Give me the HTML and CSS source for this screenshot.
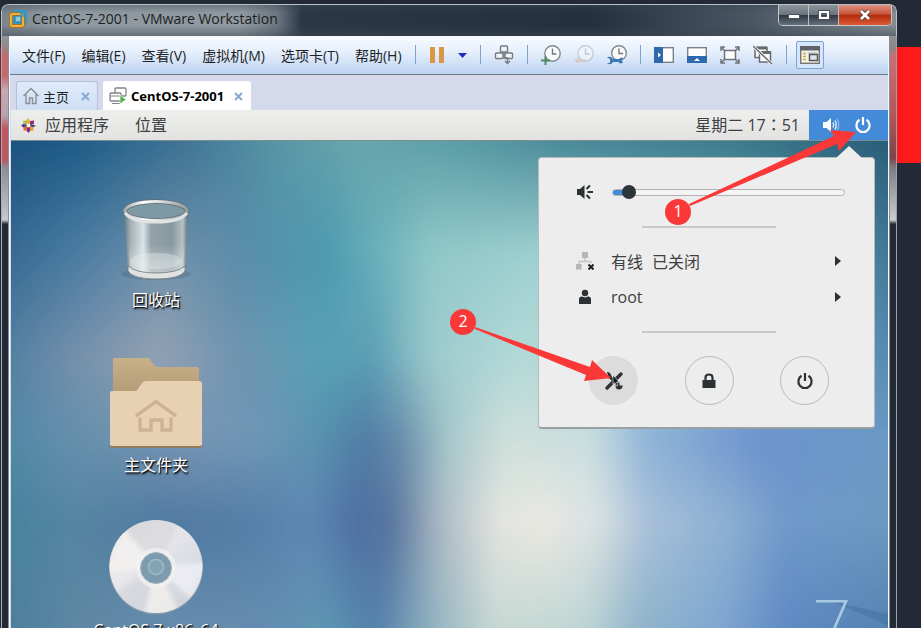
FILE: index.html
```html
<!DOCTYPE html>
<html lang="zh-CN">
<head>
<meta charset="utf-8">
<title>CentOS-7-2001 - VMware Workstation</title>
<link rel="stylesheet" href="styles.css">
</head>
<body>
<div class="backdrop-band"></div>
<div class="window">
  <header class="titlebar">
    <svg class="app-icon" width="18" height="18" viewBox="0 0 18 18" aria-hidden="true">
      <rect x="4.500" y="1.500" width="12" height="12" rx="2" fill="none" stroke="#2c9ac4" stroke-width="3"/>
      <path d="M11 4H3.500Q2 4 2 5.500V14.500Q2 16 3.500 16H12.500Q14 16 14 14.500V7" fill="none" stroke="#b96a10" stroke-width="3.600"/>
      <path d="M11 4H3.500Q2 4 2 5.500V14.500Q2 16 3.500 16H12.500Q14 16 14 14.500V7" fill="none" stroke="#f3b32f" stroke-width="2"/>
      <rect x="6" y="6" width="6" height="6" rx="1" fill="#8fc7db" stroke="#1d7da6"/>
    </svg>
    <h1 class="title">CentOS-7-2001 - VMware Workstation</h1>
    <div class="window-buttons">
      <button class="wb wb-min" aria-label="最小化"><svg width="14" height="14" viewBox="0 0 14 14"><rect x="1.500" y="6.500" width="11" height="4" fill="#fff" stroke="#4a525b"/></svg></button>
      <button class="wb wb-max" aria-label="最大化"><svg width="14" height="14" viewBox="0 0 14 14"><path d="M1.500 2.500H12.500V11.500H1.500ZM4.500 5.500V8.500H9.500V5.500Z" fill="#fff" fill-rule="evenodd" stroke="#4a525b"/></svg></button>
      <button class="wb wb-close" aria-label="关闭"><svg width="14" height="14" viewBox="0 0 14 14"><path d="M3 3L11 11M11 3L3 11" stroke="#5b3a38" stroke-width="4.500"/><path d="M3 3L11 11M11 3L3 11" stroke="#fff" stroke-width="2.600"/></svg></button>
    </div>
  </header>
  <div class="frame frame-left"></div>
  <main class="content">
    <nav class="menubar">
      <button class="menu">文件(F)</button>
      <button class="menu">编辑(E)</button>
      <button class="menu">查看(V)</button>
      <button class="menu">虚拟机(M)</button>
      <button class="menu">选项卡(T)</button>
      <button class="menu">帮助(H)</button>
      <div class="toolbar">
        <span class="sep"></span>
        <button class="tool" aria-label="挂起"><svg width="16" height="20" viewBox="0 0 16 20"><path d="M1 2H6V18H1ZM10 2H15V18H10Z" fill="#d99645"/></svg></button>
        <button class="tool" aria-label="电源选项"><svg width="9" height="20" viewBox="0 0 9 20"><path d="M0 8H9L4.500 13Z" fill="#1d2fc4"/></svg></button>
        <span class="sep"></span>
        <button class="tool" aria-label="发送按键"><svg width="20" height="20" viewBox="0 0 20 20" fill="#f2f5fa" stroke="#777b80" stroke-width="1.400"><rect x="6.500" y="1" width="7" height="6" rx="1"/><rect x="1.500" y="8" width="7.500" height="5.500" rx="1"/><rect x="11" y="8" width="7.500" height="5.500" rx="1"/><path d="M10 7V13H13.500V18M11 16L13.500 18.500L16 16" fill="none"/></svg></button>
        <span class="sep"></span>
        <button class="tool" aria-label="拍摄快照"><svg width="20" height="20" viewBox="0 0 20 20"><circle cx="11.500" cy="8.500" r="7.700" fill="#f9fafc" stroke="#85898d" stroke-width="1.400"/><path d="M11.500 3.500V9H15.500" fill="none" stroke="#777" stroke-width="1.400"/><path d="M4.500 11.500V20M0 15.500H9" stroke="#4f8a62" stroke-width="2"/></svg></button>
        <button class="tool faded" aria-label="恢复快照"><svg width="20" height="20" viewBox="0 0 20 20"><circle cx="11.500" cy="8.500" r="7.700" fill="#f9fafc" stroke="#a0a3a6" stroke-width="1.400"/><path d="M11.500 3.500V9H15.500" fill="none" stroke="#999" stroke-width="1.400"/><path d="M0 15.500L4 12.500V14.500H12V17H4V18.500Z" fill="#dba983"/></svg></button>
        <button class="tool" aria-label="管理快照"><svg width="20" height="20" viewBox="0 0 20 20"><circle cx="12" cy="8" r="7.300" fill="#f9fafc" stroke="#85898d" stroke-width="1.400"/><path d="M12 3.500V8.500H16" fill="none" stroke="#777" stroke-width="1.400"/><path d="M0 12.500Q4 10.500 6 14H12Q14 11.500 16 13L14.500 15L16 17.500Q13 19.500 11.500 17H6Q4 20.500 0 18.500L3 17.500V14Z" fill="#3b79b8"/></svg></button>
        <span class="sep"></span>
        <button class="tool" aria-label="显示库"><svg width="20" height="20" viewBox="0 0 20 20"><rect x=".7" y="2.700" width="18.600" height="14.600" fill="#fdfdfe" stroke="#7b7f86" stroke-width="1.400"/><path d="M0 2H9V18H0Z" fill="#2e69ad"/><path d="M4 7.500L7 10L4 12.500Z" fill="#fff"/></svg></button>
        <button class="tool" aria-label="缩略图栏"><svg width="20" height="20" viewBox="0 0 20 20"><rect x=".7" y="2.700" width="18.600" height="14.600" fill="#fdfdfe" stroke="#7b7f86" stroke-width="1.400"/><path d="M0 11H20V18H0Z" fill="#2e69ad"/><path d="M7 16L10 13L13 16Z" fill="#fff"/></svg></button>
        <button class="tool" aria-label="全屏"><svg width="20" height="20" viewBox="0 0 20 20" fill="none" stroke="#6f7377" stroke-width="1.500"><rect x="4.500" y="5.500" width="11" height="9" fill="#fdfdfe"/><path d="M1 6V2H5M1 2L4.500 5.500M15 2H19V6M19 2L15.500 5.500M1 14V18H5M1 18L4.500 14.500M15 18H19V14M19 18L15.500 14.500"/></svg></button>
        <button class="tool" aria-label="Unity"><svg width="20" height="20" viewBox="0 0 20 20" fill="#fdfdfe" stroke="#666a6f" stroke-width="1.500"><rect x="2" y="2.500" width="12" height="10"/><path d="M2 3H14" stroke-width="3"/><rect x="6.500" y="7" width="11" height="10"/><path d="M6.500 7.500H17.500" stroke-width="3"/><path d="M0 1L19 19" stroke="#fff" stroke-width="3"/><path d="M0 1L19 19"/></svg></button>
        <span class="sep"></span>
        <button class="tool tool-active" aria-label="控制台视图"><svg width="20" height="20" viewBox="0 0 20 20"><rect x=".7" y="1.700" width="18.600" height="16.600" fill="#f4f1e6" stroke="#777" stroke-width="1.400"/><path d="M0 1H20V5.500H0Z" fill="#5f646a"/><path d="M3 8.500H6M3 11.500H6M3 14.500H6" stroke="#d8a94a" stroke-width="1.500"/><path d="M8 8H17" stroke="#c9ced6" stroke-width="2"/><rect x="9.500" y="9.500" width="8" height="6" fill="#dfe5ee" stroke="#555" stroke-width="1.500"/></svg></button>
      </div>
    </nav>
    <div class="tabs">
      <div class="tab">
        <svg width="16" height="18" viewBox="0 0 16 18" fill="none" stroke="#8b8f94" stroke-width="1.400"><path d="M.5 9L8 1.500L15.500 9M3 7.500V16.500H6.500V11H9.500V16.500H13V7.500"/></svg>
        <span class="tab-name">主页</span>
        <button class="tab-close" aria-label="关闭主页"><svg width="9" height="9" viewBox="0 0 9 9"><path d="M1 1L8 8M8 1L1 8" stroke="#86a9d3" stroke-width="2"/></svg></button>
      </div>
      <div class="tab tab-current">
        <svg width="18" height="18" viewBox="0 0 18 18" fill="#fff" stroke="#808488" stroke-width="1.300"><rect x="6" y="1" width="11" height="8" rx="1"/><rect x="1" y="6" width="11" height="8" rx="1"/><path d="M3 16.500H11M1 9H12" stroke-width="1"/><path d="M11 8L17 12.500L11 17Z" fill="#4db848" stroke="#fff" stroke-width=".6"/></svg>
        <span class="tab-name">CentOS-7-2001</span>
        <button class="tab-close" aria-label="关闭 CentOS-7-2001"><svg width="9" height="9" viewBox="0 0 9 9"><path d="M1 1L8 8M8 1L1 8" stroke="#86a9d3" stroke-width="2"/></svg></button>
      </div>
    </div>
    <section class="guest">
      <div class="topbar">
        <svg class="distro" width="15" height="15" viewBox="0 0 15 15" aria-hidden="true"><path d="M7 0L9 3V7H4.500V3Z" fill="#e5b33c"/><path d="M9 3L13 2.500V6L9 7Z" fill="#8d2f7d"/><path d="M15 7.500L11 10L8 8V6Z" fill="#3b3a86"/><path d="M8 8L12.500 9V12.500L9 13Z" fill="#e2a03a"/><path d="M7.500 15L5 12V8H9V13Z" fill="#7a2c7c"/><path d="M0 7.500L3.500 5L7 7.500L3 10Z" fill="#4b3f8f"/><path d="M2 2.500L6 3L6.500 7L2.500 6Z" fill="#a5c05a"/><path d="M2.500 9L6.500 8L6 12.500L2.500 12.500Z" fill="#dc6b4d"/><circle cx="7.500" cy="7.500" r="2" fill="#f6f1e8"/></svg>
        <button class="top-item">应用程序</button>
        <button class="top-item">位置</button>
        <span class="clock" lang="zh-TW">星期二 17：51</span>
        <button class="status" aria-label="系统菜单">
          <svg width="18" height="16" viewBox="0 0 18 16"><path d="M1 5H4.500L9 1V15L4.500 11H1Z" fill="#fff"/><path d="M11 5.500Q12.500 8 11 10.500M13 3.500Q15.500 8 13 12.500" stroke="#e4effa" stroke-width="1.400" fill="none"/><path d="M15 1.500Q18.500 8 15 14.500" stroke="#8bb6e6" stroke-width="1.300" fill="none"/></svg>
          <svg width="18" height="18" viewBox="0 0 18 18" fill="none" stroke="#fff" stroke-width="2.200"><path d="M5.500 3.800A6.600 6.600 0 1 0 12.500 3.800M9 1V9"/></svg>
        </button>
      </div>
      <div class="desktop">
        <svg class="wallpaper" viewBox="0 0 877 488" preserveAspectRatio="none" aria-hidden="true">
          <defs>
            <linearGradient id="r0"><stop offset="0" stop-color="#1b4f7b"/><stop offset=".1" stop-color="#1f5c87"/><stop offset=".22" stop-color="#3f7496"/><stop offset=".31" stop-color="#5794a5"/><stop offset=".4" stop-color="#6aa6ad"/><stop offset=".5" stop-color="#5c9ea7"/><stop offset=".62" stop-color="#4a8a99"/><stop offset=".8" stop-color="#3d7c8d"/><stop offset="1" stop-color="#275874"/></linearGradient>
            <linearGradient id="r1"><stop offset="0" stop-color="#2f638c"/><stop offset=".1" stop-color="#4a7ca3"/><stop offset=".2" stop-color="#7291aa"/><stop offset=".28" stop-color="#5a8da9"/><stop offset=".37" stop-color="#4c9bb0"/><stop offset=".42" stop-color="#68afba"/><stop offset=".48" stop-color="#90c8c9"/><stop offset=".6" stop-color="#a0d2d2"/><stop offset=".8" stop-color="#78aebd"/><stop offset="1" stop-color="#376f91"/></linearGradient>
            <linearGradient id="r2"><stop offset="0" stop-color="#477ba0"/><stop offset=".1" stop-color="#7590ab"/><stop offset=".19" stop-color="#93a2b3"/><stop offset=".27" stop-color="#7194b0"/><stop offset=".36" stop-color="#58a0b4"/><stop offset=".42" stop-color="#5c9fb4"/><stop offset=".48" stop-color="#9ccacd"/><stop offset=".58" stop-color="#b5dad8"/><stop offset=".8" stop-color="#86b4cf"/><stop offset="1" stop-color="#4d85ad"/></linearGradient>
            <linearGradient id="r3"><stop offset="0" stop-color="#4985a3"/><stop offset=".1" stop-color="#6490ac"/><stop offset=".22" stop-color="#7894b3"/><stop offset=".3" stop-color="#6d97b6"/><stop offset=".36" stop-color="#5992af"/><stop offset=".41" stop-color="#4f7ca6"/><stop offset=".45" stop-color="#698eab"/><stop offset=".5" stop-color="#a7c8cc"/><stop offset=".56" stop-color="#cfe0da"/><stop offset=".65" stop-color="#cadfe0"/><stop offset=".71" stop-color="#90b4d8"/><stop offset=".83" stop-color="#6c93cd"/><stop offset="1" stop-color="#6a9bc4"/></linearGradient>
            <linearGradient id="r4"><stop offset="0" stop-color="#43829e"/><stop offset=".1" stop-color="#5585a1"/><stop offset=".2" stop-color="#5079a2"/><stop offset=".29" stop-color="#557fa8"/><stop offset=".35" stop-color="#5e87b4"/><stop offset=".4" stop-color="#4e70a3"/><stop offset=".44" stop-color="#59759f"/><stop offset=".49" stop-color="#aab9c3"/><stop offset=".55" stop-color="#e3e4e0"/><stop offset=".6" stop-color="#ebe8e2"/><stop offset=".66" stop-color="#d9e1e3"/><stop offset=".71" stop-color="#a9c1d9"/><stop offset=".8" stop-color="#8cafd2"/><stop offset=".86" stop-color="#6f99ca"/><stop offset="1" stop-color="#6a9abf"/></linearGradient>
            <linearGradient id="r5"><stop offset="0" stop-color="#477a98"/><stop offset=".1" stop-color="#5f88a3"/><stop offset=".2" stop-color="#6a8fae"/><stop offset=".3" stop-color="#668fb1"/><stop offset=".37" stop-color="#5e98b3"/><stop offset=".42" stop-color="#5282ac"/><stop offset=".48" stop-color="#8eb1c0"/><stop offset=".55" stop-color="#c3d7d1"/><stop offset=".64" stop-color="#bad4d2"/><stop offset=".7" stop-color="#8eb3c8"/><stop offset=".79" stop-color="#7ca5d0"/><stop offset=".86" stop-color="#5d87c2"/><stop offset="1" stop-color="#4e7da9"/></linearGradient>
            <linearGradient id="fade" x2="0" y2="1"><stop offset="0" stop-color="#000"/><stop offset="1" stop-color="#fff"/></linearGradient>
            <filter id="soft" filterUnits="userSpaceOnUse" x="-30" y="-30" width="937" height="548"><feGaussianBlur stdDeviation="9"/></filter>
            <mask id="m1" maskContentUnits="userSpaceOnUse"><path d="M-30 0H907V110H-30Z" fill="url(#fade)"/><path d="M-30 110H907V518H-30Z" fill="#fff"/></mask>
            <mask id="m2" maskContentUnits="userSpaceOnUse"><path d="M-30 110H907V210H-30Z" fill="url(#fade)"/><path d="M-30 210H907V518H-30Z" fill="#fff"/></mask>
            <mask id="m3" maskContentUnits="userSpaceOnUse"><path d="M-30 210H907V290H-30Z" fill="url(#fade)"/><path d="M-30 290H907V518H-30Z" fill="#fff"/></mask>
            <mask id="m4" maskContentUnits="userSpaceOnUse"><path d="M-30 290H907V370H-30Z" fill="url(#fade)"/><path d="M-30 370H907V518H-30Z" fill="#fff"/></mask>
            <mask id="m5" maskContentUnits="userSpaceOnUse"><path d="M-30 370H907V488H-30Z" fill="url(#fade)"/><path d="M-30 488H907V518H-30Z" fill="#fff"/></mask>
          </defs>
          <g filter="url(#soft)">
            <rect x="-30" y="-30" width="937" height="548" fill="url(#r0)"/>
            <rect x="-30" y="-30" width="937" height="548" fill="url(#r1)" mask="url(#m1)"/>
            <rect x="-30" y="-30" width="937" height="548" fill="url(#r2)" mask="url(#m2)"/>
            <rect x="-30" y="-30" width="937" height="548" fill="url(#r3)" mask="url(#m3)"/>
            <rect x="-30" y="-30" width="937" height="548" fill="url(#r4)" mask="url(#m4)"/>
            <rect x="-30" y="-30" width="937" height="548" fill="url(#r5)" mask="url(#m5)"/>
          </g>
          <path d="M822 447L877 459V470Z" fill="#3d6f9d" opacity=".45"/>
          <path d="M805 446.500H835L813 496" fill="none" stroke="#a9c8e2" stroke-width="2.600"/>
        </svg>
        <div class="icons">
          <div class="icon">
            <svg width="96" height="96" viewBox="0 0 96 96" aria-hidden="true">
              <defs>
                <linearGradient id="can"><stop offset="0" stop-color="#65767d"/><stop offset=".1" stop-color="#a9b4b7"/><stop offset=".3" stop-color="#e4eaea"/><stop offset=".42" stop-color="#97a5a9"/><stop offset=".75" stop-color="#8b9a9f"/><stop offset=".92" stop-color="#bcc6c8"/><stop offset="1" stop-color="#5f6d73"/></linearGradient>
                <linearGradient id="rim"><stop offset="0" stop-color="#a7adad"/><stop offset=".3" stop-color="#fff"/><stop offset=".6" stop-color="#d5d8d8"/><stop offset="1" stop-color="#949c9e"/></linearGradient>
                <linearGradient id="glow" x2="0" y2="1"><stop offset=".3" stop-color="#fff" stop-opacity="0"/><stop offset="1" stop-color="#fff" stop-opacity=".5"/></linearGradient>
              </defs>
              <ellipse cx="48" cy="84" rx="35" ry="6" fill="#2f4b66" opacity=".2"/>
              <path d="M16 22L20 80Q22 89 48 89Q74 89 77 80L80 22Z" fill="url(#can)" opacity=".92"/>
              <path d="M19 40L22 80Q30 87 48 87Q68 87 75 80L78 40Z" fill="url(#glow)"/>
              <ellipse cx="48" cy="71" rx="26" ry="8" fill="#e6ebea" opacity=".4"/>
              <path d="M20 76Q28 83 48 83Q69 83 77 76V81Q72 89 48 89Q25 89 20 81Z" fill="#dfe2e1" stroke="#6d7678" stroke-width=".8"/>
              <ellipse cx="48" cy="21" rx="31" ry="9.500" fill="#7e99a6" stroke="#5e6a70" stroke-width="4.500"/>
              <ellipse cx="48" cy="21" rx="31" ry="9.500" fill="none" stroke="url(#rim)" stroke-width="3.200"/>
              <path d="M17 23Q24 32 48 32Q72 32 79 23" fill="none" stroke="#e0e3e3" stroke-width="3"/>
            </svg>
            <span class="label">回收站</span>
          </div>
          <div class="icon">
            <svg width="96" height="96" viewBox="0 0 96 96" aria-hidden="true">
              <defs><linearGradient id="back" x2="0" y2="1"><stop offset="0" stop-color="#c8b188"/><stop offset="1" stop-color="#b29b75"/></linearGradient></defs>
              <path d="M5 4Q5 3 7 3H39Q42 3 43 6L46 10Q47 12 50 12H89Q91 12 91 14V40H5Z" fill="url(#back)"/>
              <path d="M2 90V39Q2 36 5 36H28Q30 36 31 33L34 28Q35 26 38 26H91Q94 26 94 28V90Q94 93 91 93H5Q2 93 2 90Z" fill="#937c5c"/>
              <path d="M2 89V38Q2 36 4 36H27Q29 36 30 34L34 28Q35 26 38 26H91Q94 26 94 28V89Q94 91 91 91H5Q2 91 2 89Z" fill="#e8d1b3"/>
              <path d="M28 61L48 46.500L68 61M32 62.500V75H43V65H54V75H63V62.500" fill="none" stroke="#cdb394" stroke-width="3.400"/>
            </svg>
            <span class="label">主文件夹</span>
          </div>
          <div class="icon">
            <svg width="96" height="96" viewBox="0 0 96 96" aria-hidden="true">
              <defs>
                <linearGradient id="disc" x2="1" y2="1"><stop offset="0" stop-color="#dcdce0"/><stop offset=".35" stop-color="#eae8ea"/><stop offset=".6" stop-color="#dddfe8"/><stop offset="1" stop-color="#c9ccd3"/></linearGradient>
                <filter id="sheen"><feGaussianBlur stdDeviation="2"/></filter>
                <clipPath id="disc-edge"><circle cx="48" cy="46.500" r="46.500"/></clipPath>
              </defs>
              <circle cx="48" cy="47.500" r="47" fill="#8798a7"/>
              <circle cx="48" cy="46.500" r="46.500" fill="url(#disc)"/>
              <g clip-path="url(#disc-edge)"><g filter="url(#sheen)">
                <path d="M48 46L-4 54L14 8Z" fill="#f4f2f0" opacity=".8"/>
                <path d="M48 46L16 8L40 -6L72 2Z" fill="#cfd0d5" opacity=".5"/>
                <path d="M48 46L100 42L84 80Z" fill="#f3f4f8" opacity=".7"/>
                <path d="M48 46L36 98H74Z" fill="#f6f3ee" opacity=".7"/>
                <path d="M48 46L34 98L6 74Z" fill="#d0d2d9" opacity=".6"/>
              </g></g>
              <circle cx="48" cy="48" r="20" fill="#f3f1f0" opacity=".75"/>
              <circle cx="48" cy="48" r="15.500" fill="#7c9bae" stroke="#a9b5bc"/>
              <circle cx="48" cy="47" r="7.500" fill="#84a3b5" stroke="#a3bac6" stroke-width="1.500"/>
            </svg>
            <span class="label">CentOS 7 x86_64</span>
          </div>
        </div>
        <aside class="system-menu">
          <div class="row volume">
            <svg width="18" height="18" viewBox="0 0 18 18" fill="#2c3133"><path d="M1 6H4L8.500 2V16L4 12H1Z"/><path d="M10.500 6L14 2.500M11.500 9H17M10.500 12L14 15.500" stroke="#2c3133" stroke-width="2"/></svg>
            <input class="slider" type="range" min="0" max="100" value="4" aria-label="音量">
          </div>
          <hr class="rule">
          <div class="rows">
            <button class="row">
              <svg width="18" height="18" viewBox="0 0 18 18"><path d="M6 0H12V6H6ZM0 12H5.500V17.500H0Z" fill="#b5b6b6"/><path d="M9 6V9.500M3 12V9.500H15V11" fill="none" stroke="#c4c5c5" stroke-width="1.400"/><path d="M12.500 12.500L17.500 17.500M17.500 12.500L12.500 17.500" stroke="#222" stroke-width="2"/></svg>
              <span class="row-text"><span>有线</span> <span>已关闭</span></span>
              <svg width="6" height="10" viewBox="0 0 6 10"><path d="M0 0L6 5L0 10Z" fill="#2c3133"/></svg>
            </button>
            <button class="row">
              <svg width="18" height="18" viewBox="0 0 18 18" fill="#2c3133"><circle cx="9" cy="5" r="3.200"/><path d="M3 16V11Q3 8.500 6 8.500L9 9.500L12 8.500Q15 8.500 15 11V16Z"/></svg>
              <span class="row-text">root</span>
              <svg width="6" height="10" viewBox="0 0 6 10"><path d="M0 0L6 5L0 10Z" fill="#2c3133"/></svg>
            </button>
          </div>
          <hr class="rule">
          <div class="actions">
            <button class="round round-hover" aria-label="设置"><svg width="20" height="20" viewBox="0 0 20 20"><path d="M3 17L9 11M11 9L17 3" stroke="#2c3133" stroke-width="3.400" stroke-linecap="round"/><path d="M4 4L16 16" stroke="#2c3133" stroke-width="2.800"/><path d="M3 1Q7 1 7.500 6L5.500 7.500Q1 7 1 3L4 5ZM11.500 15Q12 11 16 11.500L14.500 14L16 15.500L18.500 14Q19 18 15.500 18.500Q12 19 11.500 15Z" fill="#2c3133"/><path d="M9 4V13L11 11.500L12.500 15L14 14.500L12.500 11H15Z" fill="#111" stroke="#eee" stroke-width=".6"/></svg></button>
            <button class="round" aria-label="锁定"><svg width="18" height="18" viewBox="0 0 18 18"><path d="M2.500 8H15.500V16H2.500Z" fill="#2c3133"/><path d="M5.500 9V5.500Q5.500 2.500 9 2.500T12.500 5.500V9" fill="none" stroke="#2c3133" stroke-width="2.200"/></svg></button>
            <button class="round" aria-label="关机"><svg width="18" height="18" viewBox="0 0 18 18" fill="none" stroke="#2c3133" stroke-width="2.200"><path d="M5.500 3.800A6.600 6.600 0 1 0 12.500 3.800M9 1V9"/></svg></button>
          </div>
        </aside>
      </div>
    </section>
  </main>
  <div class="frame frame-right"></div>
</div>
<svg class="arrows" width="921" height="628" viewBox="0 0 921 628" aria-hidden="true">
  <path d="M689 204L834 136L830 130L856 132L839 151L837 144L690 206ZM475 327L590 367L592 360L611 378L584 381L586 375L475 329Z" fill="#fb3838"/>
</svg>
<span class="marker marker-one">1</span>
<span class="marker marker-two">2</span>
</body>
</html>
```
FILE: styles.css
```css
* { box-sizing: border-box; }

body {
  position: relative;
  height: 100vh;
  margin: 0;
  padding: 4px 24px 0 1px;
  overflow: hidden;
  background: #232a35;
  font-family: "Open Sans", "Noto Sans CJK SC", sans-serif;
  font-size: 14px;
  color: #1c1f24;
}

button {
  margin: 0;
  padding: 0;
  border: 0;
  background: none;
  font: inherit;
  color: inherit;
}

svg { display: block; flex: none; }

.backdrop-band {
  position: absolute;
  top: 47px;
  left: 0;
  right: 0;
  height: 116px;
  background: linear-gradient(90deg, #7c262b 0, #7c262b 1px, #ff1a1a 10px);
}

/* Window frame */
.window {
  position: relative;
  display: grid;
  grid-template: 32px 1fr / 8px 1fr 8px;
  height: 100%;
  border-radius: 7px 7px 0 0;
  overflow: hidden;
}

.titlebar {
  grid-column: 1 / -1;
  display: flex;
  align-items: flex-start;
  padding: 0 4px 0 7px;
  border-top: 1px solid #b9c0c6;
  border-left: 1px solid #b9c0c6;
  border-right: 1px solid #b9c0c6;
  border-radius: 7px 7px 0 0;
  background:
    linear-gradient(#3b465266 0, #3b465200 8px, #3b465200 20px, #3b465280 100%),
    linear-gradient(90deg, #7a848c 0, #8f999f 50px, #8f999f 240px, #6b767f 275px, #2a3745 300px, #23303f 66%, #4a5763 84%, #858c93 100%);
}

.app-icon { margin-top: 5px; }

.title {
  flex: 1;
  margin: 0 0 0 5px;
  font-size: 14px;
  font-weight: 400;
  line-height: 28px;
}

.window-buttons {
  display: flex;
  border: 1px solid #c3c8cd;
  border-top: 0;
  border-radius: 0 0 5px 5px;
  overflow: hidden;
}

.wb {
  display: flex;
  align-items: center;
  justify-content: center;
  width: 30px;
  height: 20px;
  border-right: 1px solid #b9bfc5;
  background: linear-gradient(#8d959c 0, #6b747c 48%, #2f3943 52%, #66717b 100%);
}

.wb-close {
  width: 52px;
  border-right: 0;
  background: linear-gradient(#dc9383 0, #c8563d 45%, #b32c0c 52%, #dc5a34 100%);
}

.frame-left {
  border-left: 1px solid #a9b0b7;
  border-right: 1px solid #878d92;
  background: linear-gradient(#8e9499 0, #9a8587 12px, #c26a6d 20px, #c26a6d 40px, #c9a9b1 54px, #b5a2ae 80px, #bd5960 92px, #bd5960 124px, #8a8f96 132px, #c5c9ce 184px, #232b37 188px);
}

.frame-right {
  border-left: 1px solid #878d92;
  border-right: 1px solid #9aa1a8;
  background: linear-gradient(#8b9196 0, #8b8588 12px, #c87076 20px, #b0575e 80px, #7d4248 122px, #7b8086 132px, #c9cdd1 184px, #232b37 188px);
}

.content {
  display: flex;
  flex-direction: column;
  min-width: 0;
  border: 1px solid #f4f7fb;
  border-width: 1px 1px 0 1px;
  background: #d4d9ec;
}

/* Menu and tool bar */
.menubar {
  display: flex;
  align-items: center;
  gap: 16px;
  height: 38px;
  padding: 0 0 2px 12px;
  border-bottom: 1px solid #70777c;
  background: linear-gradient(#f8fbff 0, #e3edfb 45%, #bcd3f2 100%);
  white-space: nowrap;
}

.toolbar {
  display: flex;
  align-items: center;
  gap: 13px;
  margin-left: -3px;
}

.sep {
  width: 1px;
  height: 19px;
  background: #7fa3cc;
}

.faded { opacity: 0.45; }

.tool-active {
  display: flex;
  align-items: center;
  justify-content: center;
  width: 28px;
  height: 28px;
  margin-left: -4px;
  border: 1px solid #7ba3d6;
  border-radius: 2px;
  background: #d6e6fa;
}

/* Tabs */
.tabs {
  display: flex;
  align-items: flex-end;
  gap: 5px;
  height: 35px;
  padding-left: 6px;
}

.tab {
  display: flex;
  align-items: center;
  gap: 4px;
  height: 29px;
  padding: 0 7px 0 6px;
  border: 1px solid #b3c1da;
  border-bottom: 0;
  border-radius: 3px 3px 0 0;
  background: linear-gradient(#dfebfb, #cfdff4);
  font-size: 13px;
}

.tab-current {
  padding: 0 7px 0 5px;
  border-color: #fff;
  background: #fff;
  font-family: "Noto Sans", sans-serif;
  font-weight: 700;
  color: #000;
}

.tab-close { margin-left: 8px; }
.tab-current .tab-close { margin-left: 6px; }

/* Guest screen */
.guest {
  flex: 1;
  display: flex;
  flex-direction: column;
  min-height: 0;
  margin-left: 1px;
}

.topbar {
  display: flex;
  align-items: center;
  height: 31px;
  padding-left: 10px;
  border-bottom: 1px solid #7c8c93;
  background: linear-gradient(#eeeeed, #e2e2e1);
  font-size: 16px;
  line-height: 28px;
  color: #3d4042;
}

.distro { margin-right: 9px; }
.top-item { margin-right: 26px; }

.clock {
  margin-left: auto;
  margin-right: 9px;
  font-family: "Open Sans", "Noto Sans CJK TC", sans-serif;
}

.status {
  display: flex;
  align-items: center;
  justify-content: center;
  gap: 14px;
  width: 79px;
  height: 100%;
  padding-right: 4px;
  background: #438bd9;
}

.desktop {
  position: relative;
  flex: 1;
  min-height: 0;
  overflow: hidden;
}

.wallpaper {
  position: absolute;
  inset: 0;
  width: 100%;
  height: 100%;
}

.icons {
  position: relative;
  display: flex;
  flex-direction: column;
  gap: 41px;
  width: 150px;
  margin-left: 70px;
  padding-top: 49px;
}

.icon {
  display: flex;
  flex-direction: column;
  align-items: center;
}

.label {
  font-size: 16px;
  line-height: 28px;
  color: #fff;
  text-shadow: 1px 1px 1px #000, 1px 2px 2px #0009;
  white-space: nowrap;
}

/* System menu */
.system-menu {
  position: absolute;
  top: 16px;
  right: 13px;
  width: 337px;
  padding: 24px 29px 22px 37px;
  border: 1px solid #b5babb;
  border-bottom: 2px solid #9aa0a2;
  border-radius: 4px;
  background: #ededed;
  font-size: 16px;
  color: #3d4042;
}

.system-menu::before {
  content: "";
  position: absolute;
  top: -12px;
  right: 12px;
  border: 13px solid transparent;
  border-top: 0;
  border-bottom: 12px solid #ededed;
}

.row {
  display: flex;
  align-items: center;
  width: 100%;
  height: 36px;
  text-align: left;
}

.row-text {
  flex: 1;
  display: flex;
  gap: 9px;
  margin-left: 17px;
}

.rows .row { padding-right: 4px; }
.volume { height: 20px; }

.slider {
  flex: 1;
  min-width: 0;
  height: 14px;
  margin: 0 0 0 18px;
  appearance: none;
  background: none;
}

.slider::-webkit-slider-runnable-track {
  height: 7px;
  border: 1px solid #b3b3b3;
  border-radius: 4px;
  background: linear-gradient(90deg, #438bd9 16px, #f4f4f4 16px);
}

.slider::-webkit-slider-thumb {
  appearance: none;
  width: 14px;
  height: 14px;
  margin-top: -5px;
  border-radius: 50%;
  background: #2c3539;
}

.rule {
  width: 134px;
  height: 2px;
  margin: 24px auto 15px 66px;
  border: 0;
  background: #c9c9c9;
}

.rows + .rule { margin: 16px auto 23px 66px; }

.actions {
  display: flex;
  justify-content: space-between;
  padding: 0 16px 0 13px;
}

.round {
  display: flex;
  align-items: center;
  justify-content: center;
  width: 49px;
  height: 49px;
  border: 1px solid #b9b9b9;
  border-radius: 50%;
}

.round-hover { border-color: #dcdcdc; background: #dcdcdc; }

/* Callouts drawn over the screen */
.arrows {
  position: absolute;
  top: 0;
  left: 0;
  pointer-events: none;
}

.marker {
  position: absolute;
  width: 26px;
  height: 26px;
  border-radius: 50%;
  background: #fb3838;
  font-size: 16px;
  line-height: 25px;
  text-align: center;
  color: #fff;
}

.marker-one { top: 199px; left: 665px; }
.marker-two { top: 309px; left: 450px; }
```
